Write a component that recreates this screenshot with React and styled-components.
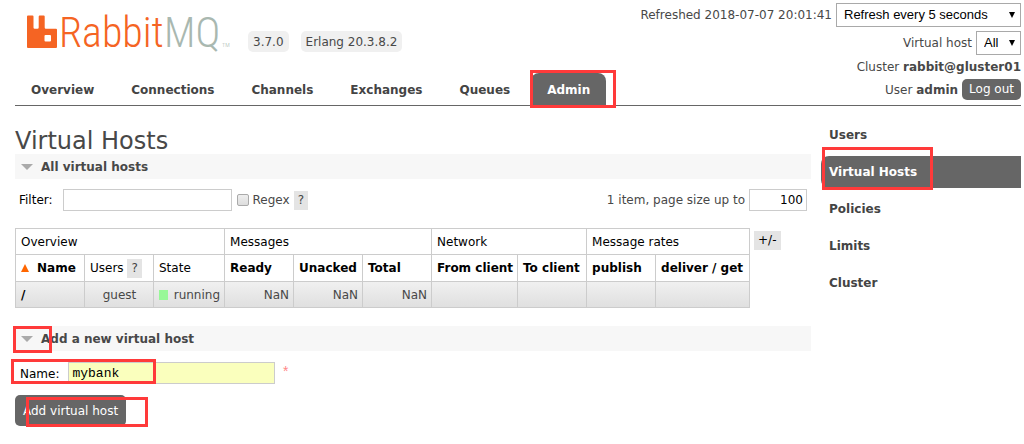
import React from "react";
import styled, { createGlobalStyle } from "styled-components";

const GlobalStyle = createGlobalStyle`
  *, *::before, *::after { box-sizing: border-box; }
  body {
    margin: 0;
    background: #fff;
    color: #484848;
    font: 12px/16px Verdana, "DejaVu Sans", sans-serif;
  }
  a { color: inherit; text-decoration: none; }
  button, input { font: inherit; color: inherit; margin: 0; }
`;

const Page = styled.div`
  padding: 0 3px 16px 15px;
`;

const Header = styled.header`
  display: flex;
  justify-content: space-between;
  border-bottom: 1px solid #666;
`;

const Brand = styled.div`
  display: flex;
  flex-direction: column;
  justify-content: space-between;
`;

const BrandRow = styled.div`
  display: flex;
  align-items: flex-end;
  gap: 12px;
  padding-left: 12px;
`;

const LogoLink = styled.a`
  display: block;
  margin-right: 4px;
  svg { display: block; }
`;

const Wordmark = styled.text`
  font-family: "Roboto Condensed", "Liberation Sans Narrow", "Liberation Sans", sans-serif;
  font-size: ${(p) => p.$size}px;
  font-weight: 300;
  fill: ${(p) => p.$color};
`;

const Version = styled.span`
  margin-bottom: 4px;
  padding: 3px 5px 2px;
  border-radius: 5px;
  background: #f0f0f0;
`;

const Tabs = styled.nav`
  display: flex;
  gap: 5px;
`;

const Tab = styled.a`
  position: relative;
  padding: 9px 16px 7px;
  border-radius: 8px 8px 0 0;
  font-weight: bold;
  color: ${(p) => (p.$active ? "#fff" : "#444")};
  background: ${(p) => (p.$active ? "#666" : "transparent")};
`;

const Mark = styled.span`
  position: absolute;
  top: ${(p) => p.$top}px;
  left: ${(p) => p.$left}px;
  width: ${(p) => p.$width}px;
  height: ${(p) => p.$height}px;
  border: 3px solid #ff3a3a;
  pointer-events: none;
`;

const Session = styled.div`
  display: flex;
  flex-direction: column;
  align-items: flex-end;
  gap: 4px;
  padding: 3px 0 5px;
`;

const SessionRow = styled.div`
  display: flex;
  align-items: center;
  gap: 4px;
`;

const SelectBox = styled.span`
  position: relative;
  display: block;
  svg {
    position: absolute;
    right: 6px;
    top: 9px;
    pointer-events: none;
  }
`;

const Select = styled.select`
  display: block;
  appearance: none;
  height: 24px;
  width: ${(p) => p.$width}px;
  padding: 0 16px 0 7px;
  border: 1px solid #a9a9a9;
  border-radius: 0;
  background: #fff;
  color: #000;
  font: 13px/20px "Liberation Sans", Arial, sans-serif;
`;

const Button = styled.button`
  padding: ${(p) => (p.$small ? "2px 7px 3px" : "8px 8px 7px")};
  border: 0;
  border-radius: 5px;
  background: #666;
  color: #fff;
`;

const Columns = styled.div`
  display: grid;
  grid-template-columns: minmax(0, 1fr) 200px;
  gap: 10px;
`;

const Main = styled.main`
  padding-top: 22px;
`;

const Title = styled.h1`
  margin: 0;
  font-size: 24px;
  line-height: 26px;
  font-weight: normal;
`;

const SectionHead = styled.h2`
  position: relative;
  display: flex;
  align-items: center;
  gap: 8px;
  margin: 0;
  padding: 5px 6px 4px;
  background: #f7f7f7;
  font-size: 12px;
  line-height: 16px;
`;

const FilterBar = styled.div`
  display: flex;
  align-items: center;
  padding: 10px 4px 17px;
`;

const Label = styled.label`
  color: ${(p) => (p.$dark ? "#000" : "inherit")};
`;

const TextInput = styled.input`
  width: ${(p) => p.$width}px;
  height: 22px;
  padding: 1px 3px;
  border: 1px solid #ccc;
  border-radius: 0;
  background: ${(p) => (p.$filled ? "#faffbd" : "#fff")};
  color: #000;
  font-family: ${(p) => (p.$filled ? '"Liberation Mono", "Courier New", monospace' : "inherit")};
  font-size: ${(p) => (p.$filled ? 13 : 12)}px;
  text-align: ${(p) => (p.$right ? "right" : "left")};
`;

const FilterField = styled.div`
  display: flex;
  align-items: center;
  gap: 10px;
`;

const Regex = styled.div`
  display: flex;
  align-items: center;
  gap: 4px;
  padding-left: 5px;
`;

const Checkbox = styled.input`
  appearance: none;
  width: 12px;
  height: 12px;
  border: 1px solid #aaa;
  border-radius: 2px;
  background: linear-gradient(#eee, #ddd);
`;

const PageSize = styled.div`
  display: flex;
  align-items: center;
  gap: 4px;
  margin-left: auto;
`;

const Chip = styled.button`
  padding: 1px 4px 2px;
  border: 0;
  background: #e4e4e4;
  color: ${(p) => (p.$dark ? "#000" : "#444")};
`;

const TableRow = styled.div`
  display: flex;
  align-items: flex-start;
  gap: 4px;
  padding-bottom: 18px;
  > button { margin-top: 3px; }
`;

const Table = styled.table`
  border-collapse: collapse;
  table-layout: fixed;
  width: 734px;
  th, td {
    height: 26px;
    padding: 0 4px 0 5px;
    border: 1px solid #ccc;
    white-space: nowrap;
    text-align: left;
    font-weight: normal;
  }
  th { color: #000; }
  thead tr + tr th { height: 27px; }
  tbody tr { background: linear-gradient(#f0f0f0, #dfdfdf); }
  tbody th { font-weight: bold; }
`;

const SortLink = styled.a`
  font-weight: bold;
  svg { margin-right: 8px; }
`;

const Cell = styled.td`
  && { text-align: ${(p) => p.$align || "left"}; }
`;

const State = styled.span`
  display: flex;
  align-items: center;
  gap: 6px;
  &::before {
    content: "";
    width: 10px;
    height: 10px;
    background: #98f898;
  }
`;

const Form = styled.form`
  display: flex;
  flex-direction: column;
  align-items: flex-start;
  gap: 11px;
  padding-top: 11px;
`;

const FormRow = styled.div`
  position: relative;
  display: flex;
  align-items: center;
  gap: 6px;
  padding-left: 5px;
  > label { padding: 2px 3px 0 0; }
`;

const Required = styled.span`
  color: #f88;
  font-family: "Liberation Mono", monospace;
  font-size: 14px;
`;

const Submit = styled.div`
  position: relative;
`;

const Side = styled.nav`
  display: flex;
  flex-direction: column;
  gap: 5px;
  padding-top: 13px;
`;

const SideLink = styled.a`
  position: relative;
  padding: 8px;
  border-radius: 8px 0 0 8px;
  font-weight: bold;
  color: ${(p) => (p.$active ? "#fff" : "#444")};
  background: ${(p) => (p.$active ? "#666" : "transparent")};
`;

function Logo() {
  return (
    <svg width="205" height="56" viewBox="0 0 205 56" role="img" aria-label="RabbitMQ">
      <path
        fill="#f56423"
        fillRule="evenodd"
        d="M1 15.5h4.5q1 0 1 1v11q0 1.2 1.2 1.2h2.8q1.2 0 1.2-1.2v-11q0-1 1-1h4q1 0 1 1v11q0 1.2 1.2 1.2H29q1 0 1 1V47q0 1-1 1H1q-1 0-1-1V16.500q0-1 1-1zM18.500 35q-1 0-1 1v4.500q0 1 1 1h4.500q1 0 1-1V36q0-1-1-1z"
      />
      <Wordmark x="32" y="47" $size={42} $color="#f56423">Rabbit</Wordmark>
      <Wordmark x="137" y="47" $size={42} $color="#a9b8b0">MQ</Wordmark>
      <Wordmark x="195" y="47" $size={6} $color="#a9b8b0">TM</Wordmark>
    </svg>
  );
}

function DownArrow() {
  return (
    <svg width="6" height="6" viewBox="0 0 6 6" aria-hidden="true">
      <path d="M0 0h6L3 6z" fill="#000" />
    </svg>
  );
}

function Collapse() {
  return (
    <svg width="12" height="6" viewBox="0 0 12 6" aria-hidden="true">
      <path d="M0 0h12L6 6z" fill="#aaa" />
    </svg>
  );
}

const tabs = ["Overview", "Connections", "Channels", "Exchanges", "Queues", "Admin"];
const sideLinks = ["Users", "Virtual Hosts", "Policies", "Limits", "Cluster"];
const columnWidths = [69, 69, 71, 69, 69, 69, 86, 69, 69, 94];
const sortColumns = ["Ready", "Unacked", "Total", "From client", "To client", "publish", "deliver / get"];

export default function App() {
  return (
    <>
      <GlobalStyle />
      <Page>
        <Header>
          <Brand>
            <BrandRow>
              <LogoLink href="#/"><Logo /></LogoLink>
              <Version>3.7.0</Version>
              <Version>Erlang 20.3.8.2</Version>
            </BrandRow>
            <Tabs>
              {tabs.map((t) => (
                <Tab key={t} href="#/" $active={t === "Admin"}>
                  {t}
                  {t === "Admin" && <Mark $top={-3} $left={-1} $width={86} $height={38} />}
                </Tab>
              ))}
            </Tabs>
          </Brand>
          <Session>
            <SessionRow>
              <label htmlFor="refresh">Refreshed 2018-07-07 20:01:41</label>
              <SelectBox>
                <Select id="refresh" $width={185}><option>Refresh every 5 seconds</option></Select>
                <DownArrow />
              </SelectBox>
            </SessionRow>
            <SessionRow>
              <label htmlFor="vhost">Virtual host</label>
              <SelectBox>
                <Select id="vhost" $width={45}><option>All</option></Select>
                <DownArrow />
              </SelectBox>
            </SessionRow>
            <SessionRow><span>Cluster <b>rabbit@gluster01</b></span></SessionRow>
            <SessionRow>
              <span>User <b>admin</b></span>
              <Button type="button" $small>Log out</Button>
            </SessionRow>
          </Session>
        </Header>
        <Columns>
          <Main>
            <Title>Virtual Hosts</Title>
            <SectionHead><Collapse />All virtual hosts</SectionHead>
            <FilterBar>
              <FilterField>
                <Label $dark htmlFor="filter">Filter:</Label>
                <TextInput id="filter" type="text" $width={169} />
              </FilterField>
              <Regex>
                <Checkbox id="regex" type="checkbox" />
                <Label htmlFor="regex">Regex</Label>
                <Chip type="button">?</Chip>
              </Regex>
              <PageSize>
                <Label htmlFor="size">1 item, page size up to</Label>
                <TextInput id="size" type="text" defaultValue="100" $width={58} $right />
              </PageSize>
            </FilterBar>
            <TableRow>
              <Table>
                <colgroup>
                  {columnWidths.map((w, i) => <col key={i} width={w} />)}
                </colgroup>
                <thead>
                  <tr>
                    <th colSpan={3}>Overview</th>
                    <th colSpan={3}>Messages</th>
                    <th colSpan={2}>Network</th>
                    <th colSpan={2}>Message rates</th>
                  </tr>
                  <tr>
                    <th>
                      <SortLink href="#/">
                        <svg width="8" height="8" viewBox="0 0 8 8" aria-hidden="true">
                          <path d="M4 0l4 8H0z" fill="#f60" />
                        </svg>
                        Name
                      </SortLink>
                    </th>
                    <th>Users <Chip type="button">?</Chip></th>
                    <th>State</th>
                    {sortColumns.map((c) => (
                      <th key={c}><SortLink href="#/">{c}</SortLink></th>
                    ))}
                  </tr>
                </thead>
                <tbody>
                  <tr>
                    <th><a href="#/">/</a></th>
                    <Cell $align="center">guest</Cell>
                    <Cell><State>running</State></Cell>
                    <Cell $align="right">NaN</Cell>
                    <Cell $align="right">NaN</Cell>
                    <Cell $align="right">NaN</Cell>
                    <Cell /><Cell /><Cell /><Cell />
                  </tr>
                </tbody>
              </Table>
              <Chip type="button" $dark>+/-</Chip>
            </TableRow>
            <SectionHead>
              <Collapse />Add a new virtual host
              <Mark $top={0} $left={-2} $width={39} $height={27} />
            </SectionHead>
            <Form>
              <FormRow>
                <Label $dark htmlFor="name">Name:</Label>
                <TextInput id="name" type="text" defaultValue="mybank" $width={207} $filled />
                <Required>*</Required>
                <Mark $top={-3} $left={-4} $width={145} $height={25} />
              </FormRow>
              <Submit>
                <Button type="button">Add virtual host</Button>
                <Mark $top={2} $left={11} $width={122} $height={30} />
              </Submit>
            </Form>
          </Main>
          <Side>
            {sideLinks.map((s) => (
              <SideLink key={s} href="#/" $active={s === "Virtual Hosts"}>
                {s}
                {s === "Virtual Hosts" && <Mark $top={-9} $left={1} $width={111} $height={43} />}
              </SideLink>
            ))}
          </Side>
        </Columns>
      </Page>
    </>
  );
}
